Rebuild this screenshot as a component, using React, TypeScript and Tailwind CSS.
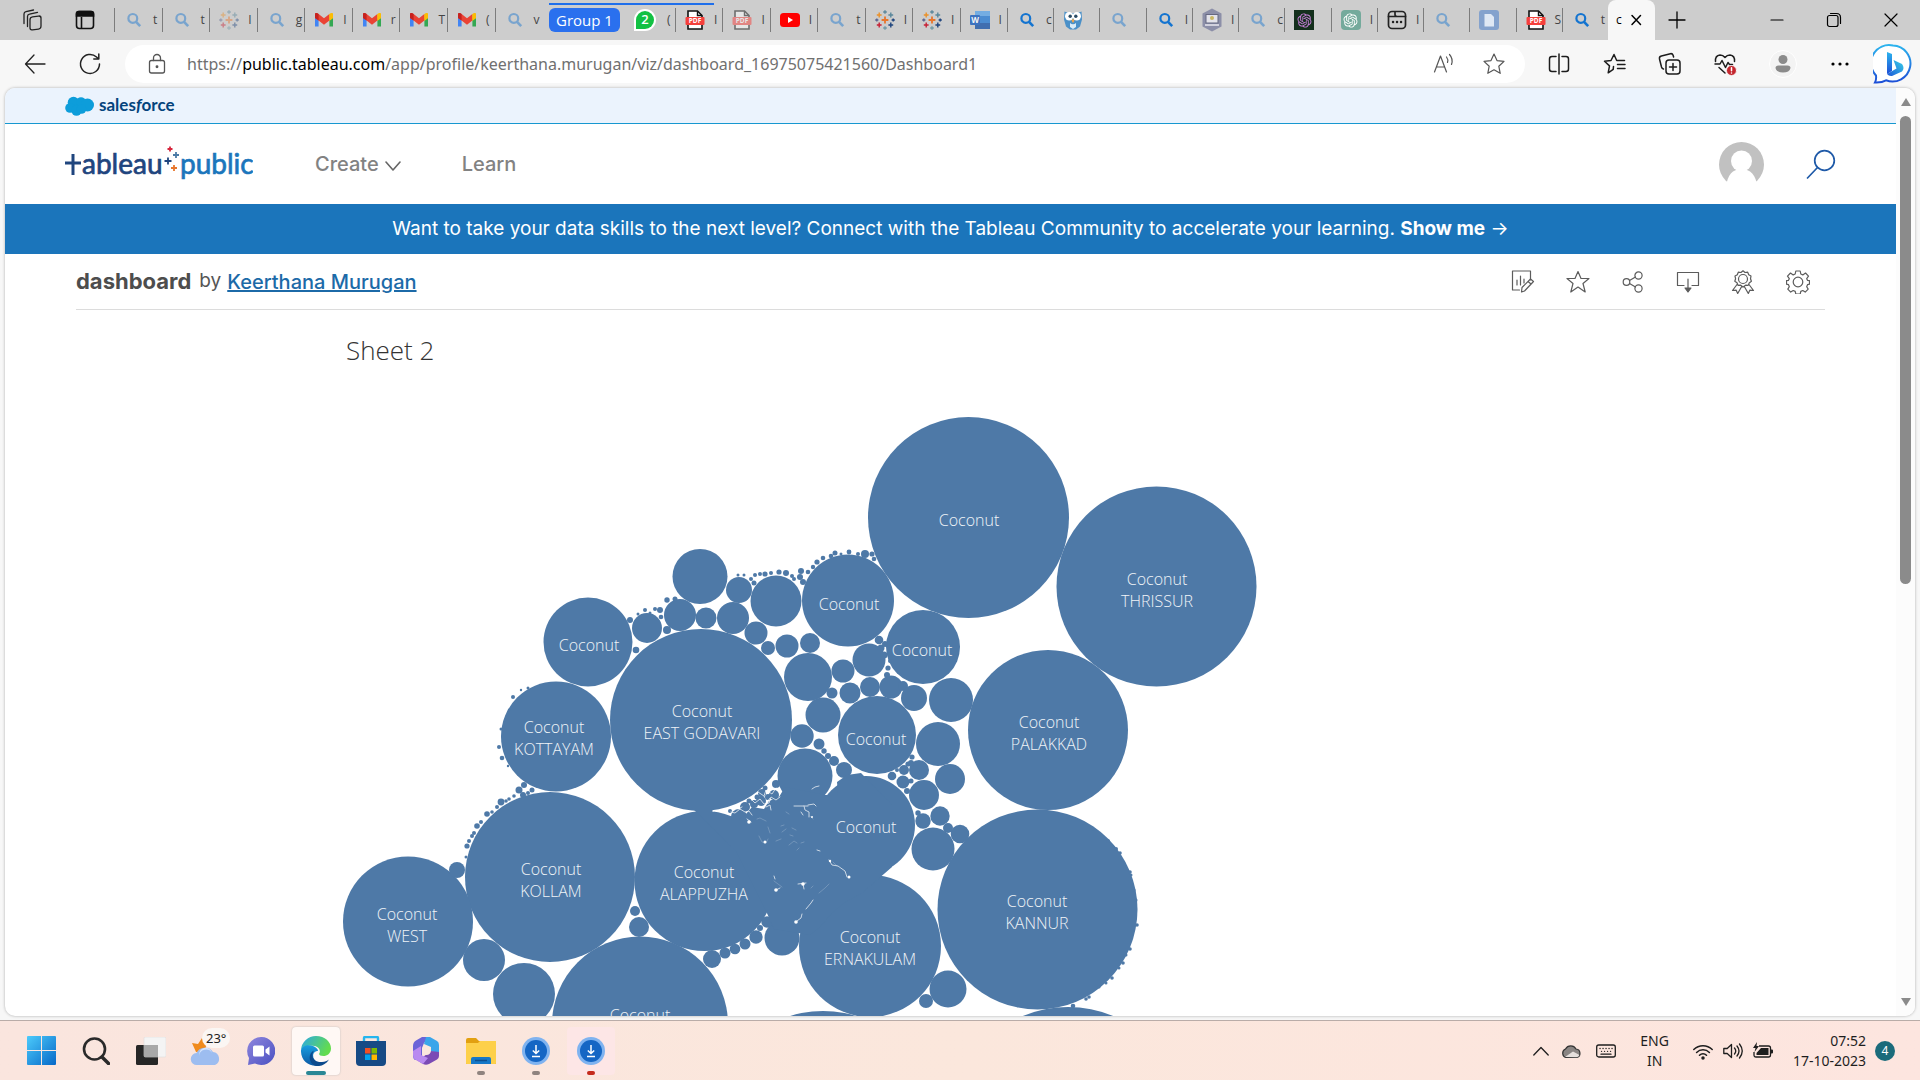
import React from "react";
import { RiOpenaiFill } from "react-icons/ri";

type P = { className?: string };
const S = ({ className = "", vb = "0 0 24 24", w = 1.5, children }: P & { vb?: string; w?: number; children: React.ReactNode }) => (
  <svg className={className} viewBox={vb} fill="none" stroke="currentColor" strokeWidth={w} strokeLinecap="round" strokeLinejoin="round" aria-hidden="true">
    {children}
  </svg>
);

/* ---------- tab favicons ---------- */
const Search = ({ dim }: { dim?: boolean }) => (
  <svg className={dim ? "w-4 h-4 opacity-45" : "w-4 h-4"} viewBox="0 0 16 16" fill="none" stroke="#1474d0" strokeWidth="2.2">
    <circle cx="6.8" cy="6.4" r="4.4" />
    <path d="M10 9.8l4.2 4.4" strokeWidth="2.6" />
  </svg>
);
const Gmail = () => (
  <svg className="w-5 h-4" viewBox="0 0 20 16">
    <path d="M1 3v11.5h3.6V7z" fill="#4285f4" />
    <path d="M19 3v11.5h-3.6V7z" fill="#34a853" />
    <path d="M15.4 2.5L19 1.5V6l-3.6 3z" fill="#fbbc04" />
    <path d="M1 2.2C1 .8 3 .4 4.6 2L10 6.3 15.4 2v6.5L10 12.7 4.6 8.5 1 6z" fill="#ea4335" />
    <path d="M1 2.2C1 .8 3 .6 4.6 2v6.5L1 6z" fill="#c5221f" />
    <path d="M15.4 2C17 .6 19 .8 19 2.4V6l-3.6 2.6z" fill="#fbbc04" />
  </svg>
);
const plus = (x: number, y: number, r: number) => `M${x - r} ${y}h${2 * r}M${x} ${y - r}v${2 * r}`;
const TableauMark = ({ dim }: { dim?: boolean }) => (
  <svg className={dim ? "w-5 h-5 opacity-45" : "w-5 h-5"} viewBox="0 0 20 20" fill="none" strokeWidth="1.4">
    <path d={plus(10, 10, 3.4)} stroke="#e8762c" strokeWidth="1.8" />
    <path d={plus(4.2, 5, 2.4)} stroke="#eb9129" />
    <path d={plus(15.8, 5, 2.4)} stroke="#59879b" />
    <path d={plus(4.2, 15, 2.4)} stroke="#c72035" />
    <path d={plus(15.8, 15, 2.4)} stroke="#1f457e" />
    <path d={plus(10, 2, 1.8)} stroke="#5b879b" />
    <path d={plus(10, 18, 1.8)} stroke="#7199a6" />
    <path d={plus(1.8, 10, 1.6)} stroke="#5b6591" />
    <path d={plus(18.2, 10, 1.6)} stroke="#1f457e" />
  </svg>
);
const Pdf = ({ dim }: { dim?: boolean }) => (
  <svg className={dim ? "w-5 h-5 opacity-50" : "w-5 h-5"} viewBox="0 0 20 20">
    <path d="M3 1h9.500l4.500 4.500V19H3z" fill="#fff" stroke="#111" strokeWidth="1.6" />
    <path d="M12.5 1v4.5h4.500" fill="none" stroke="#111" strokeWidth="1.4" />
    <rect x="0.5" y="7" width="19" height="8" rx="1" fill="#f5403c" />
    <text x="10" y="13.400" fontSize="6.5" fontWeight="700" fill="#fff" textAnchor="middle" fontFamily="Open Sans, sans-serif">PDF</text>
  </svg>
);
const YouTube = () => (
  <svg className="w-5 h-4" viewBox="0 0 20 16">
    <rect x="0" y="1" width="20" height="14" rx="3.5" fill="#f00" />
    <path d="M8 5l5 3-5 3z" fill="#fff" />
  </svg>
);
const Word = () => (
  <svg className="w-5 h-5 opacity-80" viewBox="0 0 20 20">
    <rect x="5" y="1" width="15" height="18" rx="1.2" fill="#2b7cd3" />
    <rect x="5" y="1" width="15" height="5" fill="#5fa6e8" />
    <rect x="5" y="13" width="15" height="6" fill="#1d57a8" />
    <rect x="0" y="5" width="10" height="10" rx="1" fill="#1b5dbe" />
    <text x="5" y="13" fontSize="8" fontWeight="700" fill="#fff" textAnchor="middle" fontFamily="Open Sans, sans-serif">W</text>
  </svg>
);
const Owl = () => (
  <svg className="w-5 h-5" viewBox="0 0 20 20">
    <path d="M1.500 1.500l4 1.500h9l4-1.500.5 8-2 7-4 3h-6l-4-3-2-7z" fill="#4a90c8" />
    <circle cx="6.200" cy="6.200" r="4.200" fill="#fff" />
    <circle cx="13.800" cy="6.200" r="4.200" fill="#fff" />
    <circle cx="7.200" cy="6.200" r="1.700" fill="#2a4c66" />
    <circle cx="12.800" cy="6.200" r="1.700" fill="#2a4c66" />
    <path d="M10 8.500l-1.500 2L10 13l1.500-2.500z" fill="#f1a54a" />
    <path d="M7 13q3 2.500 6 0v4l-3 2-3-2z" fill="#d9ecf8" />
  </svg>
);
const Hexagon = () => (
  <svg className="w-5 h-6 opacity-80" viewBox="0 0 20 24">
    <path d="M10 .5l9.500 5v13L10 23.500.5 18.500v-13z" fill="#7d80a0" />
    <rect x="4" y="6.500" width="12" height="8.500" fill="#e9e9f2" stroke="#4d5070" />
    <circle cx="10" cy="10" r="2" fill="#c9b24b" />
    <path d="M3 17h14" stroke="#e9e9f2" strokeWidth="1.600" />
  </svg>
);
const BrowserDots = () => (
  <S className="w-5 h-5" vb="0 0 20 20" w={1.7}>
    <rect x="1.500" y="1.500" width="17" height="17" rx="3.500" />
    <path d="M1.500 6.500h17M8 2v2.500q0 2 2 2" />
    <path d="M6 12h.1M10 12h.1M14 12h.1" strokeWidth="2.400" />
  </S>
);
const DocBlue = () => (
  <svg className="w-5 h-5" viewBox="0 0 20 20">
    <rect width="20" height="20" rx="3" fill="#84a2cd" />
    <path d="M5.500 4h6.500l3 3v9.500h-9.500z" fill="#dfe8f4" />
  </svg>
);
const OpenAiDark = () => (
  <span className="flex w-5 h-5 bg-[#14301d] items-center justify-center text-[#c77fd8]"><RiOpenaiFill size={17} /></span>
);
const OpenAiGreen = () => (
  <span className="flex w-5 h-5 rounded bg-[#74aa9c] items-center justify-center text-white"><RiOpenaiFill size={17} /></span>
);
const WhatsApp = () => (
  <span className="flex w-[18px] h-[18px] rounded-full rounded-bl-sm bg-[#12c143] items-center justify-center text-[13px] font-semibold text-white ring-2 ring-white">2</span>
);

type T = [React.ReactNode, string];
const tabsA: T[] = [
  [<Search dim />, "t"], [<Search dim />, "t"], [<TableauMark dim />, "I"], [<Search dim />, "g"], [<Gmail />, "I"],
  [<Gmail />, "r"], [<Gmail />, "T"], [<Gmail />, "("], [<Search dim />, "v"],
];
const tabsB: T[] = [
  [<Pdf />, "I"], [<Pdf dim />, "I"], [<YouTube />, "I"], [<Search dim />, "t"], [<TableauMark />, "I"], [<TableauMark />, "I"], [<Word />, "I"],
];
const tabsC: T[] = [
  [<Search />, "c"], [<Owl />, ""], [<Search dim />, ""], [<Search />, "I"], [<Hexagon />, "I"], [<Search dim />, "c"], [<OpenAiDark />, ""],
  [<OpenAiGreen />, "I"], [<BrowserDots />, "I"], [<Search dim />, ""], [<DocBlue />, ""], [<Pdf />, "S"], [<Search />, "t"],
];

const Tab = ({ t }: { t: T }) => (
  <button className="flex h-6 min-w-0 flex-1 items-center border-l border-[#7c7c7c] pl-[7px]">
    <span className="flex w-6 shrink-0 justify-center text-[#222]">{t[0]}</span>
    <span className="ml-[7px] shrink-0 text-xs leading-5 text-[#444]">{t[1]}</span>
  </button>
);

function TabStrip() {
  return (
    <div className="flex h-10 shrink-0 items-center bg-[#cdcdcd]">
      <button className="ml-[21px] w-6" aria-label="Workspaces">
        <S className="w-6 h-6 text-[#222]" w={1.3}>
          <rect x="9" y="8" width="11" height="13" rx="2.500" transform="skewY(-8) translate(0 2.500)" />
          <path d="M6.500 18.500V8.500q0-2 2-2.400l8-1.800" />
          <path d="M3 15.500V6q0-2 2-2.400L12.500 2" />
        </S>
      </button>
      <button className="ml-[28px] mr-[17px] w-6" aria-label="Tab actions">
        <svg className="w-6 h-6" viewBox="0 0 24 24" fill="none" stroke="#111" strokeWidth="1.600">
          <rect x="3.500" y="3.500" width="17" height="17" rx="3" />
          <path d="M3.500 8V5.500q0-2 2-2h13q2 0 2 2V8z" fill="#111" />
          <path d="M8.500 9v11" />
        </svg>
      </button>
      <div className="flex w-[428px]">{tabsA.map((t, i) => <Tab key={i} t={t} />)}</div>
      <div className="flex h-10 w-[133px] items-center">
        <span className="mr-[7px] h-6 w-px bg-[#7c7c7c]" />
        <div className="flex h-10 flex-1 flex-col border-t-[3px] border-[#cdcdcd]">
          <div className="h-[2px] w-[165px] bg-[#1f6feb]" />
          <div className="flex flex-1 items-center pb-[5px]">
            <button className="h-6 w-[71px] rounded-md bg-[#2a70ee] text-[15px] leading-6 text-white">Group 1</button>
            <span className="ml-4"><WhatsApp /></span>
            <span className="ml-[13px] text-xs text-[#444]">(</span>
          </div>
        </div>
      </div>
      <div className="flex w-[332px]">{tabsB.map((t, i) => <Tab key={i} t={t} />)}</div>
      <div className="flex w-[601px]">{tabsC.map((t, i) => <Tab key={i} t={t} />)}</div>
      <div className="flex h-10 w-[47px] items-center rounded-t-lg bg-[#f7f7f7] pl-2">
        <span className="w-2 text-xs">c</span>
        <button className="ml-1" aria-label="Close tab"><S className="h-4 w-4" vb="0 0 16 16" w={1.5}><path d="M4 3.500l8.500 9M12.500 3.500l-8.500 9" /></S></button>
      </div>
      <button className="ml-3 w-5" aria-label="New tab"><S className="h-5 w-5" vb="0 0 20 20" w={1.300}><path d="M10 2v16M2 10h16" /></S></button>
      <div className="ml-auto flex items-center">
        <button className="flex w-[57px] justify-center" aria-label="Minimise"><S className="h-4 w-4" vb="0 0 16 16" w={1.200}><path d="M2 8h12" /></S></button>
        <button className="flex w-[57px] justify-center" aria-label="Restore"><S className="h-4 w-4" vb="0 0 16 16" w={1.200}><rect x="1.500" y="3.500" width="10.500" height="11" rx="2" /><path d="M4.500 1.500h6q4 0 4 4v6" /></S></button>
        <button className="flex w-[58px] justify-center" aria-label="Close"><S className="h-4 w-4" vb="0 0 16 16" w={1.200}><path d="M2 2l12 12M14 2L2 14" /></S></button>
      </div>
    </div>
  );
}

function Toolbar() {
  return (
    <div className="flex h-12 shrink-0 items-center bg-[#f7f7f7] text-[#222]">
      <button className="ml-[23px] w-6" aria-label="Back"><S className="h-6 w-6" w={1.300}><path d="M22 12H2.500M11 3L2.500 12l8.500 9" /></S></button>
      <button className="ml-[31px] w-6" aria-label="Refresh"><S className="h-6 w-6" w={1.500}><path d="M21.500 12a9.500 9.500 0 1 1-3-7l2 1.800M20.800 2v5h-5" /></S></button>
      <div className="ml-[23px] flex h-[38px] min-w-0 flex-1 items-center rounded-full bg-white pl-5">
        <S className="h-6 w-6 text-[#555]" w={1.300}><rect x="4.500" y="8.500" width="15" height="12.500" rx="2" /><path d="M8.500 8.500V6a3.500 3.500 0 0 1 7 0v2.500" /><circle cx="12" cy="14.800" r=".8" fill="currentColor" /></S>
        <div role="textbox" aria-label="Address" className="ml-[18px] flex-1 font-[Noto_Sans,sans-serif] text-[16px] text-[#707070]">
          https://<span className="text-black">public.tableau.com</span>/app/profile/keerthana.murugan/viz/dashboard_16975075421560/Dashboard1
        </div>
        <button className="w-6" aria-label="Read aloud"><S className="h-6 w-6 text-[#555]" w={1.200}><path d="M2.500 20L8.500 4l6 16M4.700 15h7.600M14.500 5q2 2.500 1 5.500M17.500 2.500q4 4.500 2 10" /></S></button>
        <button className="ml-[26px] mr-[19px] w-6" aria-label="Favourite"><S className="h-6 w-6 text-[#555]" w={1.200}><path d="M12 2l3 6.600 7 .8-5.200 4.800 1.400 7.100L12 17.800l-6.200 3.500 1.400-7.100L2 9.400l7-.8z" /></S></button>
      </div>
      <div className="ml-[22px] flex items-center text-[#1c1c1c]">
        <button className="w-6" aria-label="Split screen"><S className="h-6 w-6" w={1.500}><path d="M9 4.500H5q-2.500 0-2.500 2.500v10q0 2.500 2.500 2.500h4M15 4.500h4q2.500 0 2.500 2.500v10q0 2.500-2.500 2.500h-4M12 2v20" /></S></button>
        <button className="ml-8 w-6" aria-label="Favourites"><S className="h-6 w-6" w={1.500}><path d="M10.500 14.500l-.3 2.800-5 3.500 1.300-6.900L1.500 9.300l6.500-.8L11 2.500l2.700 6h7.800M14.500 12.500h7.500M14.500 16.500h7.500" /></S></button>
        <button className="ml-[31px] w-6" aria-label="Collections"><S className="h-6 w-6" w={1.500}><rect x="8" y="8" width="14" height="14" rx="3" /><path d="M15 11.500v7M11.500 15h7M5.500 17q-1.500-.3-2-2L1.500 7Q1 4.600 3.400 4l9-2.300q2-.4 2.700 1.500l.5 1.800" /></S></button>
        <button className="ml-[31px] w-6" aria-label="Browser essentials">
          <S className="h-6 w-6" w={1.500}><path d="M2.500 9.500q-.5-6 4.500-6.500 3 0 5 2.500 2-2.500 5-2.500 5 .5 4.500 6.500M2 12h5l2-3.500 3.500 7 2.500-5 1.500 2h3M6 15.500l6 5.500" /><circle cx="18.500" cy="18.500" r="5" fill="#c4262e" stroke="#f7f7f7" strokeWidth=".8" /><path d="M18.500 15.800v3M18.500 20.900v.1" stroke="#fff" /></S>
        </button>
        <button className="ml-[32px] flex h-7 w-7 items-center justify-center rounded-full border border-white bg-[#f3f3f3]" aria-label="Profile">
          <svg className="h-5 w-5" viewBox="0 0 20 20" fill="#8b8b8b"><circle cx="10" cy="5.500" r="4.500" /><path d="M5.500 11.500h9q3 0 3 2.500-1 4.500-7.500 4.500T2.500 14q0-2.500 3-2.500z" /></svg>
        </button>
        <button className="ml-[33px] w-5" aria-label="More"><svg className="h-5 w-5" viewBox="0 0 20 20"><circle cx="3" cy="10" r="1.600" /><circle cx="10" cy="10" r="1.600" /><circle cx="17" cy="10" r="1.600" /></svg></button>
        <button className="ml-[23px] mr-[7px] w-10" aria-label="Bing">
          <svg className="h-10 w-10" viewBox="0 0 40 40">
            <defs>
              <linearGradient id="bing" x1="0" y1="0" x2="0" y2="1"><stop offset="0" stopColor="#2cb4ee" /><stop offset="1" stopColor="#1d4fd7" /></linearGradient>
              <linearGradient id="bing2" x1="1" y1="0" x2="0" y2="1"><stop offset="0" stopColor="#38d0e8" /><stop offset="1" stopColor="#1c57d8" /></linearGradient>
            </defs>
            <path d="M20 1.500a18 18 0 1 1-7 34.800q-4 2.500-11 2.200 1.500-2.500 1-7A18 18 0 0 1 20 1.500z" fill="#fff" stroke="url(#bing)" strokeWidth="2" />
            <path d="M14 8l5 2v17l-5 3z" fill="url(#bing)" />
            <path d="M20.500 16l8.500 4q3 4 0 7.500L19 32q-3 .5-5-2l9.500-5.500z" fill="url(#bing2)" />
          </svg>
        </button>
      </div>
    </div>
  );
}

/* ---------- packed bubble data ---------- */
const bubbles: number[][] = [
  [968.5, 517.5, 100.5], [1156.5, 586.5, 100], [1048, 730, 80], [1037.5, 909.5, 100], [701, 720, 91], [556, 736.5, 55], [588, 642, 44.5], [848, 600.5, 46],
  [923, 647, 37], [877, 735, 39], [866, 825, 49], [870, 946, 71], [704.5, 881, 70], [550, 877, 85], [408, 921.5, 65], [640, 1024.5, 88],
  [524, 994, 31], [484, 960, 21], [457, 870, 8], [639, 927, 10], [635, 911, 5], [700, 576.5, 27.5], [739, 590, 13], [776, 601, 25.5],
  [647, 628, 15], [680, 615, 16], [706, 618, 10.5], [733, 618, 16], [756, 633, 11.5], [768, 648, 7], [787, 646, 11.5], [810, 643, 10],
  [808, 677, 24], [843, 671, 11.5], [869, 660, 16.5], [832, 693, 5.5], [850, 693, 10.5], [870, 687, 10], [891, 687, 11.5], [903, 686, 5],
  [823, 715, 17.5], [802, 736, 11.7], [819, 744, 5.5], [824, 751, 2.7], [828, 756, 3], [834, 761, 5], [844, 770, 8], [805, 776, 27.5],
  [667, 630, 4], [636, 650, 3.3], [630, 620, 3], [879, 640, 4.3], [914, 698, 13], [951, 700, 22], [938, 744, 22], [919, 770, 10],
  [950, 779, 15], [924, 795, 15], [903, 782, 6.5], [892, 776, 4.3], [904, 770, 5], [940, 816, 9.7], [923, 821, 7.7], [918, 813, 2.7],
  [933, 849, 21.5], [960, 834, 9.3], [948, 828, 5], [782, 938, 17.5], [791, 903, 17], [712, 959, 9], [725, 953, 5.5], [735, 949, 5.3],
  [745, 944, 5.5], [756, 937, 6.7], [760, 928, 3], [767, 922, 5.7], [774, 916, 3], [770, 909, 3], [948, 989, 18.5], [926, 1001, 7],
  [823, 1121, 110], [1068, 1125, 118],
  [675, 599, 2.5], [667, 600, 2.7], [660, 610, 3], [655, 609, 2], [661, 617, 2.3], [645, 610, 2], [650, 613, 1.5], [638, 614, 1.5],
  [765, 574, 2.6], [779, 572, 2.6], [786, 573, 3], [792, 576, 2], [801, 571, 3], [800, 577, 3], [803, 582, 3], [808, 572, 2.3], [755, 575, 2], [751, 579, 2],
  [754, 583, 2.5], [760, 574, 2], [771, 573, 2], [744, 575, 1.5], [738, 575, 1.5], [794, 579, 2],
  [813, 567, 2.2], [817, 562, 2.6], [823, 558, 2.3], [831, 556, 2.3], [835, 553, 2.5], [849, 552, 2.4], [858, 554, 2], [865, 554, 4], [872, 554, 2.6], [874, 559, 2.3], [841, 554, 1.5],
  [881, 648, 3.5], [884, 655, 3.5], [888, 668, 2.6], [887, 675, 3], [890, 661, 2], [885, 644, 3],
  [912, 757, 2.6], [908, 764, 2.6], [911, 781, 2.5], [907, 791, 3], [897, 770, 2], [911, 763, 3],
  [513, 697, 2], [509, 710, 1.2], [505, 720, 1.2], [501, 729, 1.5], [499, 747, 2], [502, 758, 2.3], [508, 766, 1.2], [521, 690, 1.2], [528, 688, 1.5],
  [524, 785, 3], [519, 790, 3.5], [523, 795, 3], [532, 790, 2.5], [528, 793, 2], [514, 796, 1.8], [509, 799, 1.8], [501, 802, 3.4], [497, 807, 2], [492, 812, 1.8],
  [487, 814, 2.8], [481, 822, 2], [477, 826, 2.8], [474, 833, 2], [472, 836, 2], [469, 841, 2], [467, 846, 2.6], [506, 801, 1.8], [466, 857, 1.5],
  [1116, 849, 2], [1120, 853, 1.8], [1130, 872, 1.8], [1131, 875, 1.5], [1137, 925, 1.8], [1130, 949, 1.8], [1123, 963, 1.8], [1119, 968, 1.5],
  [1112, 978, 1.8], [1089, 997, 1.8], [1086, 999, 1.8], [1073, 1006, 2.3], [1136, 900, 1.5], [1134, 890, 1.5], [1108, 841, 2], [1126, 955, 1.5], [1099, 987, 1.5], [1106, 983, 1.5], [1083, 823, 1.5], [1093, 829, 1.5],
  [745, 807, 5], [739, 817, 8], [754, 804, 4], [761, 801, 5], [762, 793, 4], [768, 797, 3], [774, 795, 5], [776, 784, 4], [765, 788, 2.5], [757, 797, 2.5], [749, 801, 2.5], [730, 811, 2],
];

type Label = [number, number, string, string?];
const labels: Label[] = [
  [969, 526, "Coconut"], [1157, 585, "Coconut", "THRISSUR"], [849, 610, "Coconut"], [589, 651, "Coconut"], [922, 656, "Coconut"],
  [702, 717, "Coconut", "EAST GODAVARI"], [554, 733, "Coconut", "KOTTAYAM"], [876, 745, "Coconut"], [1049, 728, "Coconut", "PALAKKAD"],
  [866, 833, "Coconut"], [551, 875, "Coconut", "KOLLAM"], [704, 878, "Coconut", "ALAPPUZHA"], [407, 920, "Coconut", "WEST"],
  [870, 943, "Coconut", "ERNAKULAM"], [1037, 907, "Coconut", "KANNUR"], [640, 1021, "Coconut"],
];

function Bubbles() {
  return (
    <svg className="ml-[335px] block h-[616px] w-[930px] shrink-0" viewBox="340 400 930 616" role="img" aria-label="Packed bubble chart of coconut districts">
      <g fill="#4e79a7">
        {bubbles.map(([x, y, r], i) => <circle key={i} cx={x} cy={y} r={r} />)}
        <path d="M690 806h23v14h25l8-6 6-7 12 2 5-8 10-4 6-10 40 8 13 0-1-13 10-7 14-2 31 32v62l-30 26-18 10-12 10-12 14-10 8-36-6-8-18-30-60z" />
      </g>
      <g fill="none" stroke="#fff" strokeLinecap="round" strokeLinejoin="round" opacity=".7" strokeWidth="1">
        <path d="M731 812l4 1 5-4 5 3 4-1 3 4M747 819l4 3M736 806l2 3 4-2M752 800l3 3 5-4 4 5 5-1 2-6 5 3 4-3M758 792l6 4 2-6 6 4 4-6M766 807l4-2 1 5M770 798l-3 4" />
        <path d="M794 806l5 0 4 0 5 0M804 806l1 4 4 2 0 5M808 805l6-1 2 2M801 812l2 3M812 789l3-2 4-1" />
        <path d="M829 860l3 5 6 1 7 5 2 6M817 850l3 1M803 884l1 5M798 884l8-1M776 890l4-2M774 876l1 3M806 909l5-6 2-3M797 921l4-3 1-4" />
      </g>
      <g fill="none" stroke="#fff" strokeLinecap="round" opacity=".2" strokeWidth="1">
        <path d="M757 819l3-1 6 3M759 836l3 6 4 1 2-4M782 832l4-3M789 845l5-4 3 2M776 841l5-2M792 828l4 2M801 843l3-1M810 816l3 3M774 881l8 6M811 888l2-2M829 884l-4 4-6 5M833 862l4 4M770 833l-2-6M786 812l3 2M790 835l3 1M781 826l3-1M797 850l2-2" />
      </g>
      <g fill="#fff"><circle cx="849" cy="877" r="1.5" /><circle cx="776" cy="890" r="1.8" /><circle cx="803" cy="884" r="1.8" /><circle cx="749" cy="822" r="1.8" /><circle cx="765" cy="842" r="1.5" /><circle cx="796" cy="922" r="1.8" /><circle cx="830" cy="861" r="1.2" /><circle cx="812" cy="817" r="1" /><circle cx="713" cy="811" r=".8" /></g>
      <g fill="#f0f4f8" fontSize="16" fontWeight="300" textAnchor="middle">
        {labels.map(([x, y, a, b], i) => (
          <text key={i} x={x} y={y}>
            <tspan>{a}</tspan>
            {b && <tspan x={x} dy={22}>{b}</tspan>}
          </text>
        ))}
      </g>
    </svg>
  );
}

const tools: [string, React.ReactNode][] = [
  ["Edit", <><path d="M1.500 1h18v9M1.500 1v19h7M6 10v5M9.500 6v9M13 9v4" /><path d="M11 17.500L19.500 9l3 2.500-9 9.500-3 1zM17 11.500l3 2.500" /></>],
  ["Favorite", <path d="M12 1.500l3 7h8l-6 5 2.200 8.500-7.200-5-7.200 5L7 13.500l-6-5h8z" />],
  ["Share", <><circle cx="5.500" cy="12" r="3.300" /><circle cx="17.500" cy="5.500" r="3.600" /><circle cx="17.500" cy="18.500" r="3.600" /><path d="M8.500 10.500l6-3.500M8.500 13.500l6 3.500" /></>],
  ["Download", <><path d="M8 15.500H1.500v-13h21v13H16M12 9v10" /><path d="M9 18h6l-3 4z" fill="currentColor" /></>],
  ["Nominate", <><circle cx="12" cy="9" r="4.500" /><path d="M12 .8l2 1.700 2.700-.3 1 2.500 2.300 1.300-.5 2.800.9 2.500-2.200 1.600-1 2.500-2.600-.2L12 17l-2.300-1.800-2.700.1-1-2.500-2.200-1.500.8-2.500L4 6l2.300-1.300 1-2.500 2.700.3zM6 14.500L1.500 20.500l3.700-.3 1.500 3.300 4-7M18 14.500l4.500 6-3.700-.3-1.500 3.300-4-7" /></>],
  ["Settings", <><circle cx="12" cy="12" r="4.800" /><path d="M9.800 1h4.400l.6 3 2 .9L19.500 3l3 3.200-1.800 2.500.8 1.600 2 .4v3.500l-2 .5-.8 2 1.500 2.400-3 3-2.400-1.600-2 .9-.6 2.600H9.800l-.6-2.600-2-.9-2.500 1.600-2.900-3 1.500-2.400-.8-2-2-.5v-3.500l2-.4.8-1.600L1.500 6.200l3-3.200 2.700 1.900 2-.9z" /></>],
];

function Page() {
  return (
    <div className="flex min-h-0 flex-1 bg-[#f7f7f7] pb-1 pl-[5px] pr-[5px]">
      <div className="flex min-w-0 flex-1 overflow-hidden rounded-[10px] bg-white shadow-[0_0_3px_#aaa]">
        <main className="min-w-0 flex-1 overflow-hidden">
          <div className="flex h-9 items-center border-b border-[#1798d0] bg-[#ebf3fd] pl-[60px]">
            <svg className="h-5 w-[30px]" viewBox="0 0 30 20" fill="#0d9dda"><circle cx="8.500" cy="6.500" r="5.800" /><circle cx="5" cy="12" r="4.800" /><circle cx="16" cy="6" r="4.800" /><circle cx="22.500" cy="9" r="6.500" /><circle cx="11.500" cy="14.500" r="5.200" /><circle cx="16.500" cy="13" r="4.800" /></svg>
            <span className="ml-1 pb-[2px] font-[Lato,sans-serif] text-[17px] font-bold leading-5 text-[#04437c]">sales<i>f</i>orce</span>
          </div>
          <header className="flex h-20 items-center pl-[60px] pr-[60px] font-[Inter,sans-serif]">
            <a href="#home" aria-label="tableau public">
              <svg className="h-10 w-[188px]" viewBox="0 0 188 40" fontFamily="Lato, sans-serif" fontSize="28" strokeWidth=".7">
                <path d="M0 19h16M8 10v21" fill="none" stroke="#1f457e" strokeWidth="3" />
                <text x="17" y="30" fill="#1f457e" stroke="#1f457e">ableau</text>
                <text x="115" y="30" fill="#1b76bc" stroke="#1b76bc">public</text>
                <g fill="none" strokeWidth="1.800"><path d={plus(103, 17, 3.5)} stroke="#1f457e" /><path d={plus(105, 5, 2.5)} stroke="#d7263d" /><path d={plus(111, 11, 3)} stroke="#4b7ba6" /><path d={plus(109, 24, 3)} stroke="#e8762c" /></g>
              </svg>
            </a>
            <button className="ml-[62px] flex items-center gap-[6px] text-[20px] font-medium text-[#828282]">Create<S className="mt-1 h-4 w-4 text-[#666]" vb="0 0 16 16" w={1.600}><path d="M1 4l7 8 7-8" /></S></button>
            <a href="#learn" className="ml-[61px] text-[20px] font-medium text-[#828282]">Learn</a>
            <button className="ml-auto" aria-label="Account">
              <svg className="h-[45px] w-[45px]" viewBox="0 0 45 45"><circle cx="22.500" cy="22.500" r="22.500" fill="#c1c1c1" /><circle cx="22.500" cy="19" r="10.500" fill="#fff" /><path d="M7 45q2-18 15.500-18T38.500 45z" fill="#fff" /><path d="M0 41h45v4H0z" fill="#fff" /></svg>
            </button>
            <button className="ml-[42px]" aria-label="Search"><S className="h-[30px] w-[30px] text-[#1f5aa8]" vb="0 0 30 30" w={1.700}><circle cx="18.500" cy="11.500" r="9.800" /><path d="M11.500 18.500L1.500 29" /></S></button>
          </header>
          <div className="flex h-[50px] items-center justify-center bg-[#1b75bb] font-[Inter,sans-serif] text-[19px] text-white">
            <p>Want to take your data skills to the next level? Connect with the Tableau Community to accelerate your learning. <a href="#show" className="font-bold">Show me</a> →</p>
          </div>
          <div className="mx-[71px] flex h-14 items-center border-b border-[#dcdcdc] font-[Inter,sans-serif]">
            <h1 className="text-[22px] font-bold text-[#4d4d4d]">dashboard</h1>
            <span className="ml-2 text-[19px] text-[#555]">by</span>
            <a href="#author" className="ml-[6px] text-[20px] font-medium text-[#1c6aa8] underline">Keerthana Murugan</a>
            <div className="ml-auto mr-[15px] flex gap-[31px]">
              {tools.map(([n, p]) => <button key={n} aria-label={n}><S className="h-6 w-6 text-[#5c5c5c]" w={1.200}>{p}</S></button>)}
            </div>
          </div>
          <h2 className="flex h-[90px] items-center pb-[10px] pl-[341px] text-[26px] font-light text-[#333]">Sheet 2</h2>
          <Bubbles />
        </main>
        <div className="flex w-[19px] shrink-0 flex-col items-center bg-[#fcfcfc] py-2">
          <svg className="h-3 w-3 shrink-0" viewBox="0 0 12 12" fill="#8b8b8b"><path d="M6 2l5 8H1z" /></svg>
          <div className="mt-2 h-[468px] w-[11px] rounded-full bg-[#8b8b8b]" />
          <svg className="mt-auto h-3 w-3 shrink-0" viewBox="0 0 12 12" fill="#8b8b8b"><path d="M6 10L1 2h10z" /></svg>
        </div>
      </div>
    </div>
  );
}

/* ---------- taskbar ---------- */
const Download = () => (
  <svg className="h-7 w-7" viewBox="0 0 28 28"><circle cx="14" cy="14" r="14" fill="#7fb3f0" /><circle cx="14" cy="14" r="11" fill="#1566c4" /><path d="M14 8v8M10.800 13.500L14 16.500l3.200-3M10 19.500h8" fill="none" stroke="#fff" strokeWidth="1.500" /></svg>
);
const apps: [string, React.ReactNode, string?, string?][] = [
  ["Start", <svg className="h-[29px] w-[29px]" viewBox="0 0 29 29"><defs><linearGradient id="win" x1="0" y1="0" x2="1" y2="1"><stop offset="0" stopColor="#4ccbfb" /><stop offset="1" stopColor="#0668c8" /></linearGradient></defs><path d="M0 1q0-1 1-1h13v14H0zM15 0h13q1 0 1 1v13H15zM0 15h14v14H1q-1 0-1-1zM15 15h14v13q0 1-1 1H15z" fill="url(#win)" /></svg>],
  ["Search", <S className="h-7 w-7 text-[#2a2a2a]" vb="0 0 28 28" w={2.600}><circle cx="12.500" cy="12" r="10.500" /><path d="M20 20l6.500 6.500" strokeWidth="3.500" /></S>],
  ["Task view", <svg className="h-7 w-[30px]" viewBox="0 0 30 28"><rect x="0" y="8" width="22" height="20" rx="1.500" fill="#262626" /><rect x="8" y="0" width="22" height="20" rx="1.500" fill="#f4f4f4" stroke="#ddd" strokeWidth=".6" /><path d="M8 8h14v12H8z" fill="#a8a8a8" /></svg>],
  ["Weather", <span className="relative block h-8 w-8"><svg className="h-8 w-8" viewBox="0 0 32 32"><path d="M2 8l6 1 4-6 5 5-3 10-8-1z" fill="#f08a1c" /><path d="M7 30a6 6 0 0 1-.5-12A9 8 0 0 1 23 17a6.800 6.800 0 0 1 2 13z" fill="#9dbdf0" /><path d="M9 21a7 7 0 0 1 13-3q-2-6-8-5-5 1-5 8z" fill="#d5e4fb" /></svg><span className="absolute -top-[7px] left-3 rounded-full bg-[#fbf6f3] px-1 text-[13px] leading-5 text-[#222]">23°</span></span>],
  ["Chat", <svg className="h-7 w-7" viewBox="0 0 28 28"><defs><linearGradient id="chat" x1="0" y1="0" x2="1" y2="1"><stop offset="0" stopColor="#8f86dd" /><stop offset="1" stopColor="#4a51c2" /></linearGradient></defs><path d="M14 0a14 14 0 1 1-6 26.500L1 28l1-7A14 14 0 0 1 14 0z" fill="url(#chat)" /><rect x="6" y="8.500" width="11" height="11" rx="1.500" fill="#fff" /><path d="M18.500 12.500l4-3v9l-4-3z" fill="#fff" /></svg>],
  ["Edge", <svg className="h-[30px] w-[30px]" viewBox="0 0 30 30"><defs><linearGradient id="eg" x1="0" y1="0" x2="1" y2=".4"><stop offset="0" stopColor="#2aa7e8" /><stop offset="1" stopColor="#63dc4e" /></linearGradient><linearGradient id="eb" x1="0" y1="0" x2="0" y2="1"><stop offset="0" stopColor="#1a9ee0" /><stop offset="1" stopColor="#0c59a4" /></linearGradient></defs><path d="M0 14A15 15 0 0 1 15 0c9 0 15 6 15 12.500 0 5-4 7.500-7.500 7.500-4 0-5-1.500-4-3 1-2 0-6-5-7C8 9 2 10 0 14z" fill="url(#eg)" /><path d="M0 14C2 9 8 8.500 12 10c3 1 5 3 5 5-6 0-7 8 0 12l3 2C9 32-.5 25 0 14z" fill="url(#eb)" /><path d="M13 14.500c-4 6 0 12 8 11.500 3 0 5-1 7-2.500-3 5-8 7-13 6.500C8 28 6 18 13 14.500z" fill="#0d4a8c" /></svg>, "bg-[#fff8f5] shadow-[0_0_2px_#bbb]", "w-5 bg-[#2a8795]"],
  ["Store", <svg className="h-[30px] w-[30px]" viewBox="0 0 30 30"><path d="M8 7V2q0-1 1-1h12q1 0 1 1v5" fill="none" stroke="#25b5ee" strokeWidth="2.400" /><path d="M0 5h30v21q0 4-4 4H4q-4 0-4-4z" fill="#164a85" /><path d="M9 12h5.500v5.500H9z" fill="#f25022" /><path d="M15.500 12H21v5.500h-5.500z" fill="#7fba00" /><path d="M9 18.500h5.500V24H9z" fill="#00a4ef" /><path d="M15.500 18.500H21V24h-5.500z" fill="#ffb900" /></svg>],
  ["Microsoft 365", <svg className="h-7 w-7" viewBox="0 0 28 28"><path d="M10 0h8l-6 6-2 5v10l-7 2q-2-1-2-5V9q0-4 3-5.500z" fill="#6b63d8" /><path d="M14 0h4l7 4q2 1 2 4v9l-8-3V10l-7-3z" fill="#3aa5ea" /><path d="M27 15v4q0 2-2 3.500L17 27q-3 1.500-6 0L3 22l8-2 8-6z" fill="#7b4bb5" /><path d="M1 14v4q0 3 2 4.500l8 4.500 5-6-7-3V9z" fill="#b98af0" /><circle cx="14.500" cy="13.500" r="4.500" fill="#fbe7dd" /></svg>],
  ["File Explorer", <svg className="h-7 w-[30px]" viewBox="0 0 30 28"><path d="M0 3q0-2 2-2h8l3 3h15q2 0 2 2v20q0 1-1 1H1q-1 0-1-1z" fill="#e2a010" /><path d="M0 6h12l2-2h16v22q0 1-1 1H1q-1 0-1-1z" fill="#fdd04a" /><path d="M5 27v-5q0-2 2-2h16q2 0 2 2v5z" fill="#1678c8" /><path d="M9 23.500h12" stroke="#0d4f8f" strokeWidth="1.500" /></svg>, "", "w-2 bg-[#8f837f]"],
  ["Downloader", <Download />, "", "w-2 bg-[#8f837f]"],
  ["Downloader 2", <Download />, "bg-[#fde6e6]", "w-2 bg-[#c42b1c]"],
];

function Taskbar() {
  return (
    <footer className="flex h-[60px] shrink-0 items-center border-t border-[#b9aca8] bg-linear-to-r from-[#fae5de] via-[#fbe7dc] to-[#fde5df] font-[Noto_Sans,sans-serif] text-[#1e1e1e]">
      <nav className="ml-[17px] flex gap-[7px]">
        {apps.map(([n, icon, bg, dot]) => (
          <button key={n} aria-label={n} className={"relative flex h-12 w-12 items-center justify-center rounded " + (bg ?? "")}>
            {icon}
            {dot && <span className={"absolute bottom-0 h-1 rounded-full " + dot} />}
          </button>
        ))}
      </nav>
      <div className="ml-auto flex items-center">
        <button aria-label="Show hidden icons"><S className="h-4 w-4" vb="0 0 16 16" w={1.300}><path d="M.8 12L8 4.500l7.200 7.500" /></S></button>
        <svg className="ml-3 h-5 w-5" viewBox="0 0 20 20" aria-label="OneDrive"><path d="M5 16.500a4.500 4.500 0 0 1-.5-8.500A6 6 0 0 1 15 8a4.300 4.300 0 0 1 .5 8.500z" fill="#8a8583" stroke="#333" strokeWidth="1.200" /><path d="M4 16l8-5.500 6.500 3.500q-.5 2-3 2.200z" fill="#e6e0dd" /></svg>
        <S className="ml-[15px] h-5 w-5" vb="0 0 20 20" w={1.300}><rect x=".7" y="4" width="18.600" height="12" rx="2" /><path d="M4 7.500h.1M7 7.500h.1M10 7.500h.1M13 7.500h.1M16 7.500h.1M5.500 10.300h.1M8.500 10.300h.1M11.500 10.300h.1M14.500 10.300h.1M5 13.200h10" /></S>
        <div className="ml-6 text-center text-[14px] leading-5">ENG<br />IN</div>
        <S className="ml-6 h-5 w-5" vb="0 0 20 20" w={1.500}><path d="M.8 8.500a13 13 0 0 1 18.400 0M3.600 11.500a9 9 0 0 1 12.800 0M6.500 14.300a5 5 0 0 1 7 0" /><circle cx="10" cy="17" r="1" fill="currentColor" /></S>
        <S className="ml-[10px] h-5 w-5" vb="0 0 20 20" w={1.300}><path d="M.8 7.500h3.400L8.500 3.500v13l-4.300-4H.8zM11.500 7q2.500 3 0 6M14 5q4 5 0 10M16.500 3q5.500 7 0 14" /></S>
        <svg className="ml-[10px] h-5 w-5" viewBox="0 0 20 20" fill="#1e1e1e"><path d="M6 5h9.500q2 0 2 2v7q0 2-2 2H3q-2 0-2-2v-3" fill="none" stroke="#1e1e1e" strokeWidth="1.300" /><path d="M8 7h7.500v7H3.500v-2zM18 8.500h1q1 0 1 1v2q0 1-1 1h-1zM4 1L0 7h2.500L1.500 11 6 5H3.500z" /></svg>
        <div className="ml-5 text-right text-[14px] leading-5">07:52<br />17-10-2023</div>
        <span className="ml-[9px] mr-[25px] flex h-5 w-5 items-center justify-center rounded-full bg-[#1b6b7b] text-[12px] text-white">4</span>
      </div>
    </footer>
  );
}

export default function App() {
  return (
    <div className="flex h-screen flex-col overflow-hidden bg-[#f7f7f7] font-[Open_Sans,sans-serif]">
      <TabStrip />
      <Toolbar />
      <Page />
      <Taskbar />
    </div>
  );
}
